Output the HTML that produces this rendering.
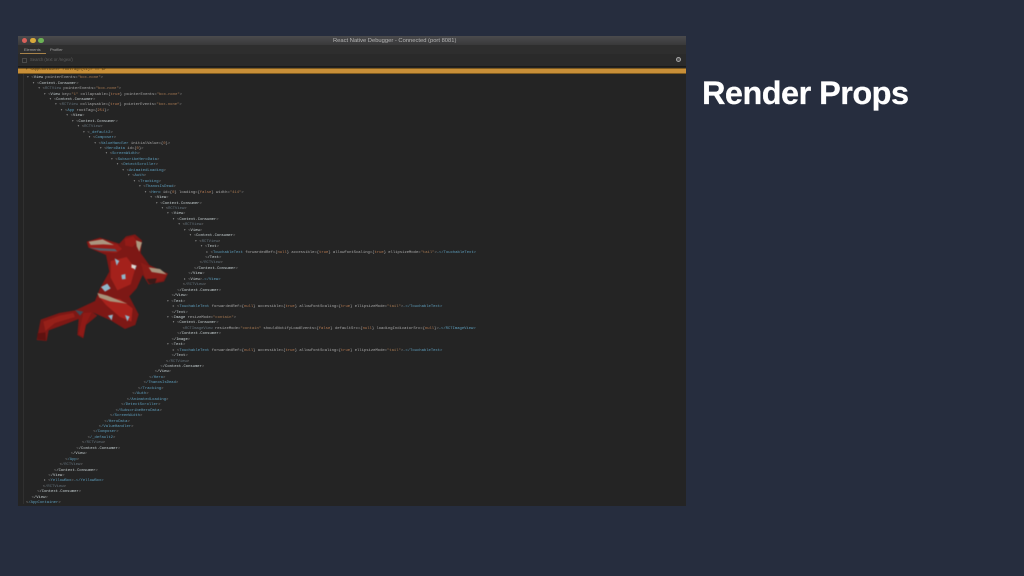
<!DOCTYPE html>
<html><head><meta charset="utf-8"><style>
html,body{margin:0;padding:0;width:1024px;height:576px;overflow:hidden;background:#262d3e}
#w{position:absolute;left:18px;top:36px;width:667.5px;height:470px;background:#242424;overflow:hidden}
#tb{position:absolute;left:0;top:0;width:100%;height:9px;background:linear-gradient(#4b4b4d,#39393a)}
#tb span{position:absolute;left:315px;top:1.5px;font:5.8px/7px "Liberation Sans",sans-serif;color:#b5b5b5;white-space:pre;filter:blur(.25px)}
.d{position:absolute;top:1.7px;width:5.5px;height:5.5px;border-radius:50%;filter:blur(.3px)}
#tabs{position:absolute;left:0;top:9px;width:100%;height:9px;background:#2e2e2e;font:4px/9px "Liberation Sans",sans-serif;color:#a2a2a2;filter:blur(.25px)}
#s{position:absolute;left:0;top:18px;width:100%;height:11.5px;background:#2a2a2a;border-bottom:1px solid #1a1a1a;font:4.2px/11px "Liberation Sans",sans-serif;color:#5f5f5f;filter:blur(.25px)}
#hl{position:absolute;left:0;top:32.2px;width:100%;height:5.5px;background:#c88f38;border-top:.5px solid #7d5a20;border-bottom:.5px solid #7d5a20;box-sizing:border-box}
#g{position:absolute;left:4.5px;top:38px;width:1px;height:430px;background:#303030}
#c{position:absolute;left:0;top:0;filter:blur(.35px)}
.l{position:absolute;font:3.85px/5.4px "Liberation Mono",monospace;white-space:pre;color:#8f8f8f}
.a{color:#9a9a9a}.n{color:#5e9fbe}.r{color:#63727c}.w{color:#c8d2d4}.t{color:#a9a9a9}.o{color:#b97b52}.v{color:#a87a52}
h1{position:absolute;left:702px;top:74px;margin:0;font:700 32.5px/38px "Liberation Sans",sans-serif;color:#fff;white-space:pre;letter-spacing:-.55px;filter:blur(.3px);-webkit-text-stroke:.25px #fff}
#im{position:absolute;left:20px;top:225px;width:170px;height:125px;filter:blur(.6px)}
</style></head><body>
<div id="w">
<div id="tb"><i class="d" style="left:3.5px;background:#d9605a"></i><i class="d" style="left:12px;background:#d9aa3c"></i><i class="d" style="left:20.3px;background:#6cb356"></i><span>React Native Debugger - Connected (port 8081)</span></div>
<div id="tabs"><span style="position:absolute;left:6px;top:0">Elements</span><span style="position:absolute;left:32px;top:0">Profiler</span><i style="position:absolute;left:2px;top:8px;width:26px;height:1px;background:#a8834a"></i></div>
<div id="s"><i style="position:absolute;left:4px;top:3.5px;width:3px;height:3px;border:.5px solid #4a4a4a"></i><span style="position:absolute;left:12px;top:0">Search (text or /regex/)</span><i style="position:absolute;left:657.5px;top:3px;width:5px;height:5px;border-radius:50%;border:1.7px solid #a5a5a5;background:#555;box-sizing:border-box"></i></div>
<div id="hl"></div><div id="g"></div>
</div>
<div id="c">
<div class="l" style="left:25.5px;top:67.9px;color:#4a3512">▾ &lt;AppContainer rootTag={51}&gt; == $r</div>
<script>
var L=[
[1,'▾ ','w','View',' pointerEvents="box-none"'],[2,'▾ ','w','Context.Consumer'],[3,'▾ ','r','RCTView',' pointerEvents="box-none"'],[4,'▾ ','w','View',' key="1" collapsable={true} pointerEvents="box-none"'],[5,'▾ ','w','Context.Consumer'],[6,'▾ ','r','RCTView',' collapsable={true} pointerEvents="box-none"'],[7,'▾ ','n','App',' rootTag={251}'],[8,'▾ ','w','View'],[9,'▾ ','w','Context.Consumer'],[10,'▾ ','r','RCTView'],[11,'▾ ','n','_default2'],[12,'▾ ','n','Composer'],[13,'▾ ','n','ValueHandler',' initialValue={0}'],[14,'▾ ','n','HeroData',' id={0}'],[15,'▾ ','n','ScreenWidth'],[16,'▾ ','n','SubscribeHeroData'],[17,'▾ ','n','DetectScroller'],[18,'▾ ','n','AnimatedLoading'],[19,'▾ ','n','Auth'],[20,'▾ ','n','Tracking'],[21,'▾ ','n','ThanosIsDead'],[22,'▾ ','n','Hero',' id={0} loading={false} width="414"'],[23,'▾ ','w','View'],[24,'▾ ','w','Context.Consumer'],[25,'▾ ','r','RCTView'],[26,'▾ ','w','View'],[27,'▾ ','w','Context.Consumer'],[28,'▾ ','r','RCTView'],[29,'▾ ','w','View'],[30,'▾ ','w','Context.Consumer'],[31,'▾ ','r','RCTView'],[32,'▾ ','w','Text'],
[33,'▸ ','n','TouchableText',' forwardedRef={null} accessible={true} allowFontScaling={true} ellipsizeMode="tail"','…</TouchableText>'],
[32,'','w','/Text'],[31,'','r','/RCTView'],[30,'','w','/Context.Consumer'],[29,'','w','/View'],[29,'▸ ','w','View','','…</View>'],[28,'','r','/RCTView'],[27,'','w','/Context.Consumer'],[26,'','w','/View'],
[26,'▾ ','w','Text'],[27,'▸ ','n','TouchableText',' forwardedRef={null} accessible={true} allowFontScaling={true} ellipsizeMode="tail"','…</TouchableText>'],[26,'','w','/Text'],
[26,'▾ ','w','Image',' resizeMode="contain"'],[27,'▾ ','w','Context.Consumer'],[28,'  ','r','RCTImageView',' resizeMode="contain" shouldNotifyLoadEvents={false} defaultSrc={null} loadingIndicatorSrc={null}','…</RCTImageView>'],[27,'','w','/Context.Consumer'],[26,'','w','/Image'],
[26,'▾ ','w','Text'],[27,'▸ ','n','TouchableText',' forwardedRef={null} accessible={true} allowFontScaling={true} ellipsizeMode="tail"','…</TouchableText>'],[26,'','w','/Text'],
[25,'','r','/RCTView'],[24,'','w','/Context.Consumer'],[23,'','w','/View'],[22,'','n','/Hero'],[21,'','n','/ThanosIsDead'],[20,'','n','/Tracking'],[19,'','n','/Auth'],[18,'','n','/AnimatedLoading'],[17,'','n','/DetectScroller'],[16,'','n','/SubscribeHeroData'],[15,'','n','/ScreenWidth'],[14,'','n','/HeroData'],[13,'','n','/ValueHandler'],[12,'','n','/Composer'],[11,'','n','/_default2'],[10,'','r','/RCTView'],[9,'','w','/Context.Consumer'],[8,'','w','/View'],[7,'','n','/App'],[6,'','r','/RCTView'],[5,'','w','/Context.Consumer'],[4,'','w','/View'],[4,'▸ ','n','YellowBox','','…</YellowBox>'],[3,'','r','/RCTView'],[2,'','w','/Context.Consumer'],[1,'','w','/View'],[0,'','n','/AppContainer']];
function e(s){return s.replace(/&/g,'&amp;').replace(/</g,'&lt;').replace(/>/g,'&gt;')}
function at(s){return e(s).replace(/(=)"([^"]*)"/g,'=<span class="v">"$2"</span>').replace(/=\{([^}]*)\}/g,'={<span class="o">$1</span>}')}
var h='';
L.forEach(function(x,i){var y=70.5+(i+1)*5.45-2.7+2.9;var left=26+x[0]*5.6-(x[1]?4.8:0);
h+='<div class="l" style="left:'+left+'px;top:'+y+'px">'+(x[1]?'<span class="a">'+x[1]+'</span>':'')+'&lt;<span class="'+x[2]+'">'+x[3]+'</span><span class="t">'+at(x[4]||'')+'</span>&gt;'+(x[5]?'<span class="n">'+e(x[5])+'</span>':'')+'</div>'});
document.write(h);
</script>
</div>
<svg id="im" viewBox="0 0 510 375">
<!-- silhouette -->
<path fill="#7d1815" d="M200 50L240 38L298 56L318 34L345 28L366 46L362 84L388 120L444 146L432 170L386 178L368 150L350 190L328 214L356 268L346 300L315 312L272 286L240 272L218 262L232 272L198 300L190 340L172 330L176 282L130 300L86 316L80 348L50 345L62 284L118 264L165 256L225 228L240 190L268 140L258 90L205 68Z"/>
<!-- lower legs -->
<path fill="#962019" d="M70 290L118 272L160 264L165 276L105 294L76 318Z"/>
<path fill="#5e1210" d="M52 325L76 322L78 346L52 343Z"/>
<path fill="#8e1a16" d="M190 264L215 262L198 296L190 335L176 328Z"/>
<!-- thigh -->
<path fill="#a8221c" d="M236 214L300 222L338 250L334 290L300 276L258 240Z"/>
<path fill="#a8927a" d="M232 204L262 212L322 236L270 229L238 218Z"/>
<!-- torso -->
<path fill="#a4211b" d="M272 108L320 96L346 130L332 178L292 196L272 158Z"/>
<!-- far arm -->
<path fill="#8a1c17" d="M362 112L388 124L440 148L428 166L388 174L374 156Z"/>
<path fill="#a8957e" d="M386 127L420 132L440 148L395 141Z"/>
<path fill="#3a1a18" d="M380 162L410 160L405 176L388 176Z"/>
<!-- forearm -->
<path fill="#971d18" d="M204 52L240 42L292 58L306 72L288 84L240 80L208 66Z"/>
<path fill="#ab9680" d="M206 50L248 43L282 60L250 58L212 60Z"/>
<path fill="#56606a" d="M206 68L285 72L292 79L240 77Z"/>
<!-- head -->
<path fill="#931b17" d="M314 42L340 34L352 50L338 66L316 62Z"/>
<path fill="#ad987f" d="M348 46L366 52L358 80L350 64Z"/>
<!-- arc lights -->
<path fill="#8fb6c9" d="M243 186L262 176L272 190L255 200ZM304 150L316 147L317 162L306 163ZM284 100L298 108L290 122ZM333 118L350 122L345 135ZM264 272L279 269L275 286ZM315 270L329 275L322 289Z"/>
<path fill="#3d4a55" d="M165 255L190 260L180 272Z"/>
<path fill="#e0d9d2" d="M335 118L348 122L344 132L334 128Z"/>
</svg>
<h1>Render Props</h1>
</body></html>
